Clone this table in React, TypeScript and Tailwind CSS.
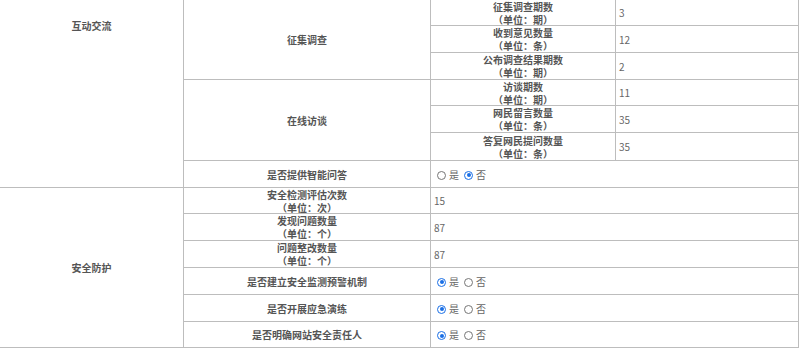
import React from 'react';

type Item = { label: string; unit?: string; value: string };

const survey: Item[] = [
  { label: '征集调查期数', unit: '期', value: '3' },
  { label: '收到意见数量', unit: '条', value: '12' },
  { label: '公布调查结果期数', unit: '期', value: '2' },
];

const interview: Item[] = [
  { label: '访谈期数', unit: '期', value: '11' },
  { label: '网民留言数量', unit: '条', value: '35' },
  { label: '答复网民提问数量', unit: '条', value: '35' },
];

const safetyCounts: Item[] = [
  { label: '安全检测评估次数', unit: '次', value: '15' },
  { label: '发现问题数量', unit: '个', value: '87' },
  { label: '问题整改数量', unit: '个', value: '87' },
];

const safetyChecks = [
  { label: '是否建立安全监测预警机制', yes: true },
  { label: '是否开展应急演练', yes: true },
  { label: '是否明确网站安全责任人', yes: true },
];

const font = { fontFamily: '"Noto Sans CJK SC", "Microsoft YaHei", sans-serif' };

function Label({ item }: { item: Item }) {
  return (
    <div className="bg-white flex flex-col items-center justify-center text-[10px] leading-[13px] font-semibold text-[#555]">
      <span>{item.label}</span>
      {item.unit && <span>（单位：{item.unit}）</span>}
    </div>
  );
}

function Radio({ checked }: { checked: boolean }) {
  return checked ? (
    <span className="w-[9px] h-[9px] rounded-full border-[1.5px] border-[#1a6fe6] flex items-center justify-center mt-[2px]">
      <span className="w-[4px] h-[4px] rounded-full bg-[#1a6fe6]" />
    </span>
  ) : (
    <span className="w-[9px] h-[9px] rounded-full border border-[#767676] mt-[2px]" />
  );
}

function YesNo({ yes }: { yes: boolean }) {
  return (
    <div className="bg-white col-span-2 flex items-center pl-[6px] text-[10px] text-[#666]">
      <Radio checked={yes} />
      <span className="ml-[3px]">是</span>
      <span className="ml-[5px]" />
      <Radio checked={!yes} />
      <span className="ml-[3px]">否</span>
    </div>
  );
}

export default function App() {
  return (
    <div className="w-[800px] h-[348px] bg-white overflow-hidden" style={font}>
      <div className="w-[799px] grid grid-cols-[183px_246px_184px_182px] grid-rows-[25px_26px_26px_25px_26px_27px_26px_25px_26px_26px_26px_26px_25px] gap-px bg-[#bdbdbd] border-r border-b border-[#bdbdbd]">
        {/* 互动交流 */}
        <div className="bg-white row-span-7 flex justify-center pt-[19px] text-[10px] leading-[13px] font-semibold text-[#555]">
          互动交流
        </div>
        <div className="bg-white row-span-3 flex items-center justify-center text-[10px] font-semibold text-[#555]">
          征集调查
        </div>
        {survey.map((it) => (
          <React.Fragment key={it.label}>
            <Label item={it} />
            <div className="bg-white flex items-center pl-[3px] text-[10px] text-[#666]">{it.value}</div>
          </React.Fragment>
        ))}
        <div className="bg-white row-span-3 flex items-center justify-center text-[10px] font-semibold text-[#555]">
          在线访谈
        </div>
        {interview.map((it) => (
          <React.Fragment key={it.label}>
            <Label item={it} />
            <div className="bg-white flex items-center pl-[3px] text-[10px] text-[#666]">{it.value}</div>
          </React.Fragment>
        ))}
        <Label item={{ label: '是否提供智能问答', value: '' }} />
        <YesNo yes={false} />

        {/* 安全防护 */}
        <div className="bg-white row-span-6 flex items-center justify-center text-[10px] font-semibold text-[#555]">
          安全防护
        </div>
        {safetyCounts.map((it) => (
          <React.Fragment key={it.label}>
            <Label item={it} />
            <div className="bg-white col-span-2 flex items-center pl-[3px] text-[10px] text-[#666]">{it.value}</div>
          </React.Fragment>
        ))}
        {safetyChecks.map((c) => (
          <React.Fragment key={c.label}>
            <Label item={{ label: c.label, value: '' }} />
            <YesNo yes={c.yes} />
          </React.Fragment>
        ))}
      </div>
    </div>
  );
}
